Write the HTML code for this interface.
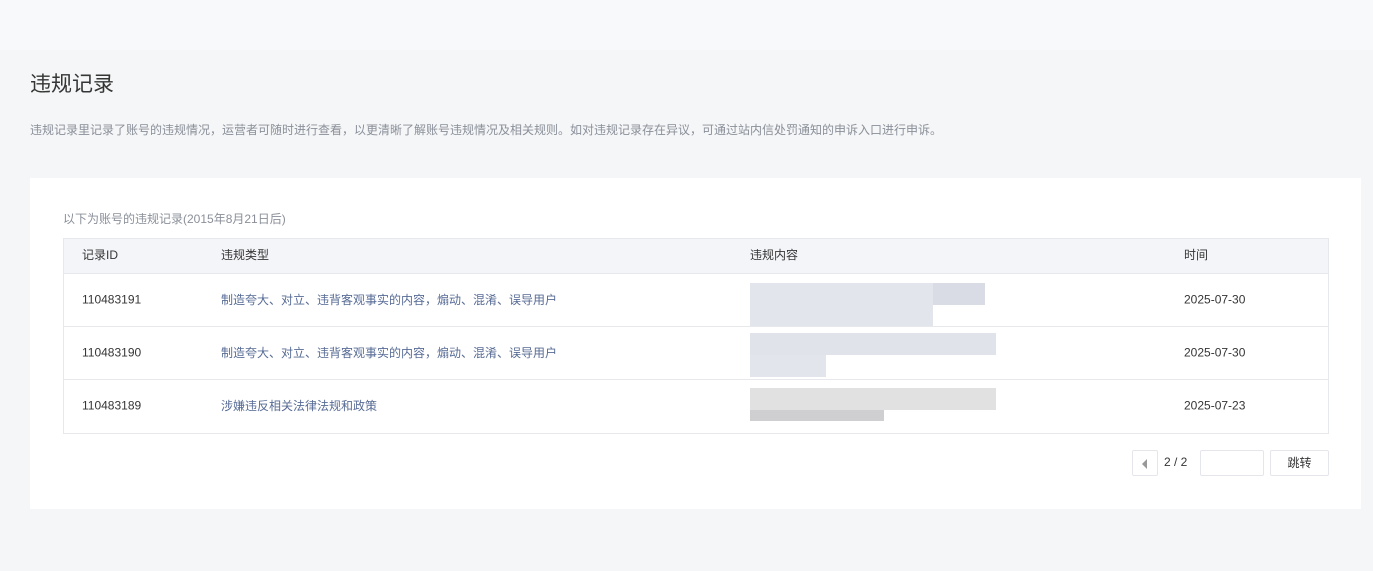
<!DOCTYPE html>
<html><head><meta charset="utf-8"><style>
body{margin:0;width:1373px;height:571px;background:#f5f6f7;font-family:"Liberation Sans","Noto Sans CJK SC",sans-serif;position:relative;overflow:hidden}
.top{position:absolute;left:0;top:0;width:1373px;height:50px;background:#f8f9fa}
h1{position:absolute;left:30px;top:68px;margin:0;font-size:21px;font-weight:normal;color:#353535}
.desc{position:absolute;left:30px;top:121px;font-size:12px;color:#8a8f99}
.card{position:absolute;left:30px;top:178px;width:1331px;height:331px;background:#fff}
.sub{position:absolute;left:63px;top:210px;font-size:12px;color:#8a8f99}
.tbl{position:absolute;left:63px;top:238px;width:1264px;height:194px;border:1px solid #e7e8eb}
.row{position:absolute;left:0;width:1264px;border-top:1px solid #e7e8eb;font-size:12px;color:#353535}
.c{position:absolute;top:50%;transform:translateY(-60%);white-space:nowrap}
.blue{color:#576b95}
.px{position:absolute;background:#dfe2ea}
.btn{position:absolute;border:1px solid #e4e6eb;background:#fff;border-radius:2px;font-size:12px;color:#353535;box-sizing:border-box}
</style></head><body>
<div class="top"></div>
<h1>违规记录</h1>
<div class="desc">违规记录里记录了账号的违规情况，运营者可随时进行查看，以更清晰了解账号违规情况及相关规则。如对违规记录存在异议，可通过站内信处罚通知的申诉入口进行申诉。</div>
<div class="card"></div>
<div class="sub">以下为账号的违规记录(2015年8月21日后)</div>
<div class="tbl">
 <div class="row" style="top:0;height:34px;border-top:none;background:#f4f5f8">
  <span class="c" style="left:18px">记录ID</span><span class="c" style="left:157px">违规类型</span><span class="c" style="left:686px">违规内容</span><span class="c" style="left:1120px">时间</span></div>
 <div class="row" style="top:34px;height:53px">
  <span class="c" style="left:18px">110483191</span><span class="c blue" style="left:157px">制造夸大、对立、违背客观事实的内容，煽动、混淆、误导用户</span><span class="c" style="left:1120px">2025-07-30</span>
  <div class="px" style="left:686px;top:9px;width:183px;height:44px;background:#e2e5ec"></div><div class="px" style="left:869px;top:9px;width:52px;height:22px;background:#d9dce5"></div></div>
 <div class="row" style="top:87px;height:53px">
  <span class="c" style="left:18px">110483190</span><span class="c blue" style="left:157px">制造夸大、对立、违背客观事实的内容，煽动、混淆、误导用户</span><span class="c" style="left:1120px">2025-07-30</span>
  <div class="px" style="left:686px;top:6px;width:246px;height:22px;background:#e0e3ea"></div><div class="px" style="left:686px;top:28px;width:76px;height:22px;background:#e3e5ec"></div></div>
 <div class="row" style="top:140px;height:53px">
  <span class="c" style="left:18px">110483189</span><span class="c blue" style="left:157px">涉嫌违反相关法律法规和政策</span><span class="c" style="left:1120px">2025-07-23</span>
  <div class="px" style="left:686px;top:8px;width:246px;height:22px;background:#e2e1e1"></div><div class="px" style="left:686px;top:30px;width:134px;height:11px;background:#cfcfd2"></div></div>
</div>
<div class="btn" style="left:1132px;top:450px;width:26px;height:26px"><span style="position:absolute;left:9px;top:8px;width:0;height:0;border-top:5px solid transparent;border-bottom:5px solid transparent;border-right:5px solid #999"></span></div>
<div style="position:absolute;left:1164px;top:455px;font-size:12px;color:#353535">2 / 2</div>
<div class="btn" style="left:1200px;top:450px;width:64px;height:26px"></div>
<div class="btn" style="left:1270px;top:450px;width:59px;height:26px;text-align:center;line-height:24px">跳转</div>
</body></html>
